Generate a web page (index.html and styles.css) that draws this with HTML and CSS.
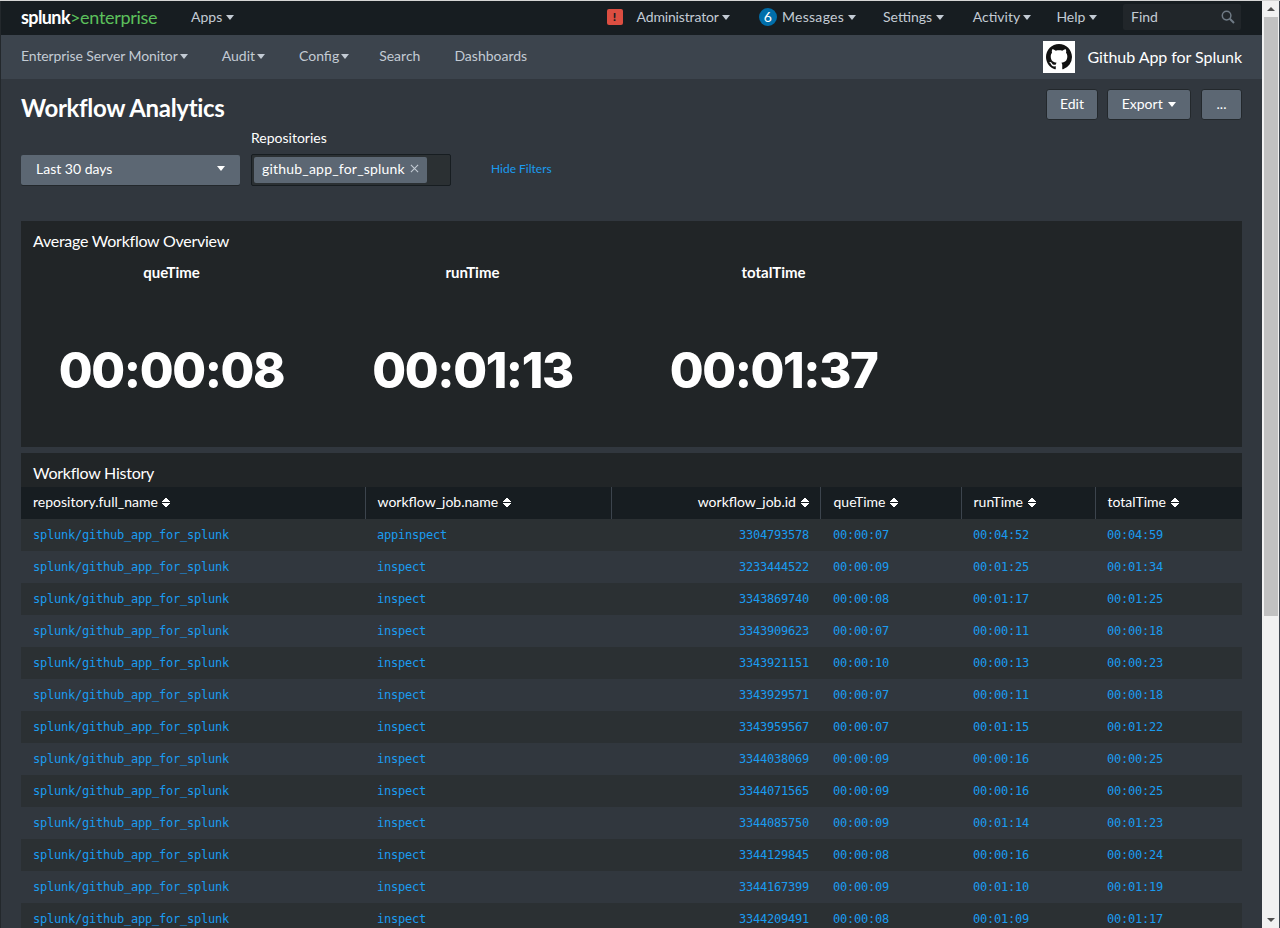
FILE: index.html
```html
<!DOCTYPE html>
<html lang="en">

<head>
    <meta charset="UTF-8">
    <meta name="viewport" content="width=device-width, initial-scale=1.0">
    <title>Workflow Analytics</title>
    <link rel="stylesheet" href="styles.css">
</head>

<body>
    <div class="window">
        <div class="page">
            <!-- top bar -->
            <div class="nav">
                <div class="logo">splunk<span class="logo-green">&gt;enterprise</span></div>
                <a class="nav-item apps">Apps <i class="caret"></i></a>
                <div class="nav-right">
                    <span class="alert">!</span>
                    <a class="nav-item admin">Administrator <i class="caret"></i></a>
                    <span class="badge">6</span>
                    <a class="nav-item messages">Messages <i class="caret"></i></a>
                    <a class="nav-item settings">Settings <i class="caret"></i></a>
                    <a class="nav-item activity">Activity <i class="caret"></i></a>
                    <a class="nav-item help">Help <i class="caret"></i></a>
                    <div class="find">
                        <span class="find-text">Find</span>
                        <svg class="find-icon" viewBox="0 0 14 14" width="14" height="14">
                            <circle cx="5.6" cy="5.6" r="4.3" fill="none" stroke="#6f7a85" stroke-width="1.5"></circle>
                            <path d="M8.8 8.8 L13 13" stroke="#6f7a85" stroke-width="2"></path>
                        </svg>
                    </div>
                </div>
            </div>

            <!-- app bar -->
            <div class="app-bar">
                <a class="app-item app-item-long">Enterprise Server Monitor<i class="caret"></i></a>
                <a class="app-item">Audit<i class="caret"></i></a>
                <a class="app-item app-item-config">Config<i class="caret"></i></a>
                <a class="app-item">Search</a>
                <a class="app-item">Dashboards</a>
                <div class="app-name">
                    <div class="app-logo">
                        <svg viewBox="0 0 16 16" width="26" height="26">
                            <path fill="#111" d="M8 0C3.58 0 0 3.58 0 8c0 3.54 2.29 6.53 5.47 7.59.4.07.55-.17.55-.38 0-.19-.01-.82-.01-1.49-2.01.37-2.53-.49-2.69-.94-.09-.23-.48-.94-.82-1.13-.28-.15-.68-.52-.01-.53.63-.01 1.08.58 1.23.82.72 1.21 1.87.87 2.33.66.07-.52.28-.87.51-1.07-1.78-.2-3.64-.89-3.64-3.95 0-.87.31-1.59.82-2.15-.08-.2-.36-1.02.08-2.12 0 0 .67-.21 2.2.82.64-.18 1.32-.27 2-.27.68 0 1.36.09 2 .27 1.53-1.04 2.2-.82 2.2-.82.44 1.1.16 1.92.08 2.12.51.56.82 1.27.82 2.15 0 3.07-1.87 3.75-3.65 3.95.29.25.54.73.54 1.48 0 1.07-.01 1.93-.01 2.2 0 .21.15.46.55.38A8.013 8.013 0 0016 8c0-4.42-3.58-8-8-8z"></path>
                        </svg>
                    </div>
                    <span class="app-title">Github App for Splunk</span>
                </div>
            </div>

            <div class="content">
                <div class="title-row">
                    <h1>Workflow Analytics</h1>
                    <div class="actions">
                        <button class="btn btn-edit">Edit</button>
                        <button class="btn btn-export">Export <i class="caret caret-white"></i></button>
                        <button class="btn btn-more">...</button>
                    </div>
                </div>

                <div class="filters">
                    <div class="time-picker">
                        <span>Last 30 days</span>
                        <i class="caret caret-white"></i>
                    </div>
                    <div class="filter">
                        <label>Repositories</label>
                        <div class="multi">
                            <span class="chip">github_app_for_splunk
                                <svg viewBox="0 0 10 10" width="9" height="9">
                                    <path d="M1 1 L9 9 M9 1 L1 9" stroke="#c3cbd4" stroke-width="1.2"></path>
                                </svg>
                            </span>
                        </div>
                    </div>
                    <a class="hide-filters">Hide Filters</a>
                </div>

                <div class="panel panel-overview">
                    <h2>Average Workflow Overview</h2>
                    <div class="singles">
                        <div class="single">
                            <div class="single-label">queTime</div>
                            <div class="single-value">00:00:08</div>
                        </div>
                        <div class="single">
                            <div class="single-label">runTime</div>
                            <div class="single-value">00:01:13</div>
                        </div>
                        <div class="single">
                            <div class="single-label">totalTime</div>
                            <div class="single-value">00:01:37</div>
                        </div>
                    </div>
                </div>

                <div class="panel panel-history">
                    <h2>Workflow History</h2>
                    <table>
                        <colgroup>
                            <col class="col-repo">
                            <col class="col-name">
                            <col class="col-id">
                            <col class="col-que">
                            <col class="col-run">
                            <col class="col-total">
                        </colgroup>
                        <thead>
                            <tr>
                                <th>repository.full_name <i class="sort"></i></th>
                                <th>workflow_job.name <i class="sort"></i></th>
                                <th class="num">workflow_job.id <i class="sort"></i></th>
                                <th>queTime <i class="sort"></i></th>
                                <th>runTime <i class="sort"></i></th>
                                <th>totalTime <i class="sort"></i></th>
                            </tr>
                        </thead>
                        <tbody>
                            <tr><td>splunk/github_app_for_splunk</td><td>appinspect</td><td class="num">3304793578</td><td>00:00:07</td><td>00:04:52</td><td>00:04:59</td></tr>
                            <tr><td>splunk/github_app_for_splunk</td><td>inspect</td><td class="num">3233444522</td><td>00:00:09</td><td>00:01:25</td><td>00:01:34</td></tr>
                            <tr><td>splunk/github_app_for_splunk</td><td>inspect</td><td class="num">3343869740</td><td>00:00:08</td><td>00:01:17</td><td>00:01:25</td></tr>
                            <tr><td>splunk/github_app_for_splunk</td><td>inspect</td><td class="num">3343909623</td><td>00:00:07</td><td>00:00:11</td><td>00:00:18</td></tr>
                            <tr><td>splunk/github_app_for_splunk</td><td>inspect</td><td class="num">3343921151</td><td>00:00:10</td><td>00:00:13</td><td>00:00:23</td></tr>
                            <tr><td>splunk/github_app_for_splunk</td><td>inspect</td><td class="num">3343929571</td><td>00:00:07</td><td>00:00:11</td><td>00:00:18</td></tr>
                            <tr><td>splunk/github_app_for_splunk</td><td>inspect</td><td class="num">3343959567</td><td>00:00:07</td><td>00:01:15</td><td>00:01:22</td></tr>
                            <tr><td>splunk/github_app_for_splunk</td><td>inspect</td><td class="num">3344038069</td><td>00:00:09</td><td>00:00:16</td><td>00:00:25</td></tr>
                            <tr><td>splunk/github_app_for_splunk</td><td>inspect</td><td class="num">3344071565</td><td>00:00:09</td><td>00:00:16</td><td>00:00:25</td></tr>
                            <tr><td>splunk/github_app_for_splunk</td><td>inspect</td><td class="num">3344085750</td><td>00:00:09</td><td>00:01:14</td><td>00:01:23</td></tr>
                            <tr><td>splunk/github_app_for_splunk</td><td>inspect</td><td class="num">3344129845</td><td>00:00:08</td><td>00:00:16</td><td>00:00:24</td></tr>
                            <tr><td>splunk/github_app_for_splunk</td><td>inspect</td><td class="num">3344167399</td><td>00:00:09</td><td>00:01:10</td><td>00:01:19</td></tr>
                            <tr><td>splunk/github_app_for_splunk</td><td>inspect</td><td class="num">3344209491</td><td>00:00:08</td><td>00:01:09</td><td>00:01:17</td></tr>
                        </tbody>
                    </table>
                </div>
            </div>
        </div>

        <!-- browser scrollbar -->
        <div class="scrollbar">
            <i class="arrow-up"></i>
            <div class="thumb"></div>
            <i class="arrow-down"></i>
        </div>
    </div>
</body>

</html>
```

FILE: styles.css
```css
html, body {
    margin: 0;
    padding: 0;
    height: 100%;
    overflow: hidden;
}

body {
    font-family: Lato, "Open Sans", Arial, sans-serif;
    font-size: 14px;
    background-color: #31373e;
    color: #fff;
}

.window {
    display: flex;
    height: 928px;
    border-top: 1px solid #d5d5d5;
    box-sizing: border-box;
}

.page {
    flex: 1;
    min-width: 0;
    overflow: hidden;
    border-left: 1px solid #23282c;
}

.caret {
    display: inline-block;
    width: 0;
    height: 0;
    border-left: 4px solid transparent;
    border-right: 4px solid transparent;
    border-top: 5px solid #c3cbd4;
    vertical-align: 2px;
}

.caret-white {
    border-top-color: #fff;
}

/* top bar */
.nav {
    display: flex;
    align-items: center;
    height: 34px;
    padding-left: 20px;
    padding-bottom: 2px;
    box-sizing: border-box;
    background-color: #171d21;
    color: #c3cbd4;
}

.logo {
    width: 170px;
    font-size: 18px;
    font-weight: 700;
    letter-spacing: -0.6px;
    color: #fff;
}

.logo-green {
    font-weight: 400;
    letter-spacing: -0.3px;
    color: #5cc05c;
}

.nav-item {
    padding-bottom: 2px;
}

.nav-right {
    display: flex;
    align-items: center;
    margin-left: auto;
    padding-right: 21px;
}

.alert {
    width: 16px;
    height: 16px;
    margin-right: 14px;
    border-radius: 2px;
    background-color: #dc4e41;
    color: #171d21;
    font-size: 12px;
    font-weight: 900;
    line-height: 16px;
    text-align: center;
}

.admin {
    letter-spacing: -0.15px;
}

.badge {
    width: 18px;
    height: 18px;
    margin-left: 29px;
    margin-right: 5px;
    border-radius: 50%;
    background-color: #006eaa;
    color: #fff;
    line-height: 18px;
    text-align: center;
}

.messages {
    letter-spacing: 0.3px;
}

.settings {
    margin-left: 27px;
}

.activity {
    margin-left: 29px;
}

.help {
    margin-left: 25px;
}

.find {
    display: flex;
    align-items: center;
    justify-content: space-between;
    width: 118px;
    height: 26px;
    margin-left: 26px;
    padding: 0 6px 0 8px;
    box-sizing: border-box;
    border-radius: 2px;
    background-color: #21262a;
}

.find-text {
    padding-bottom: 2px;
}

/* app bar */
.app-bar {
    display: flex;
    align-items: center;
    height: 44px;
    padding: 0 20px;
    background-color: #3c444d;
    color: #c3cbd4;
    gap: 30px;
}

.app-item {
    margin-right: 4px;
    padding-bottom: 4px;
}

.app-item .caret {
    margin-left: 2px;
}

.app-item-long {
    letter-spacing: -0.1px;
}

.app-item-config {
    margin-right: 0;
}

.app-name {
    display: flex;
    align-items: center;
    margin-left: auto;
    font-size: 16px;
    letter-spacing: -0.05px;
    color: #fff;
    gap: 12px;
}

.app-title {
    padding-bottom: 2px;
}

.app-logo {
    display: flex;
    align-items: center;
    justify-content: center;
    width: 32px;
    height: 32px;
    background-color: #fff;
}

/* dashboard */
.content {
    padding: 0 20px;
}

.title-row {
    display: flex;
    justify-content: space-between;
    align-items: flex-start;
    padding-top: 10px;
}

h1 {
    margin: 4px 0 0;
    font-size: 24px;
    font-weight: 700;
    letter-spacing: -0.33px;
    line-height: 30px;
}

.actions {
    display: flex;
    gap: 9px;
}

.btn {
    height: 31px;
    padding: 0 0 2px;
    border: 1px solid #23282c;
    border-radius: 3px;
    background-color: #5c6773;
    color: #fff;
    font-family: inherit;
    font-size: 14px;
}

.btn .caret {
    margin-left: 2px;
}

.btn-edit {
    width: 52px;
}

.btn-export {
    width: 84px;
}

.btn-more {
    width: 41px;
    margin-left: 1px;
}

.filters {
    display: flex;
    align-items: flex-end;
    margin-top: 7px;
    height: 56px;
}

.time-picker {
    display: flex;
    align-items: center;
    justify-content: space-between;
    width: 219px;
    height: 30px;
    margin-bottom: 1px;
    padding: 0 15px 3px;
    box-sizing: border-box;
    border-radius: 2px;
    background-color: #5c6773;
    box-shadow: 0 1px 0 #23282c;
}

.filter {
    margin-left: 11px;
}

.filter label {
    display: block;
    margin-bottom: 7px;
    line-height: 18px;
}

.multi {
    display: flex;
    align-items: center;
    width: 200px;
    height: 32px;
    padding: 0 2px;
    box-sizing: border-box;
    border: 1px solid #171d21;
    border-radius: 2px;
    background-color: #2b3033;
}

.chip {
    display: flex;
    align-items: center;
    height: 26px;
    padding: 0 8px 3px;
    box-sizing: border-box;
    border-radius: 2px;
    background-color: #5c6773;
    letter-spacing: 0.2px;
    gap: 5px;
}

.hide-filters {
    margin-left: 40px;
    margin-bottom: 10px;
    font-size: 12px;
    color: #1a9cf0;
}

.panel {
    background-color: #212527;
}

.panel h2 {
    margin: 0;
    padding: 0 12px;
    font-size: 16px;
    font-weight: 400;
    letter-spacing: -0.25px;
}

.panel-overview {
    height: 226px;
    margin-top: 35px;
    padding-top: 10px;
    box-sizing: border-box;
}

.panel-overview h2 {
    line-height: 19px;
}

.singles {
    display: flex;
}

.single {
    width: 301px;
    text-align: center;
}

.single-label {
    margin-top: 13px;
    font-size: 15px;
    font-weight: 700;
    line-height: 18px;
}

.single-value {
    margin-top: 59px;
    font-family: Inter, Lato, sans-serif;
    font-size: 49px;
    font-weight: 800;
    letter-spacing: -1.4px;
    line-height: 62px;
}

.panel-history {
    margin-top: 6px;
}

.panel-history h2 {
    padding-top: 6px;
    line-height: 28px;
}

table {
    width: 100%;
    table-layout: fixed;
    border-collapse: collapse;
}

.col-repo { width: 344px; }
.col-name { width: 246px; }
.col-id { width: 209px; }
.col-que { width: 141px; }
.col-run { width: 134px; }

th {
    height: 32px;
    padding: 0 11px 3px 12px;
    box-sizing: border-box;
    border-left: 1px solid #3c444d;
    background-color: #171d21;
    font-size: 14px;
    font-weight: 400;
    text-align: left;
}

th:first-child {
    border-left: none;
}

th.num, td.num {
    text-align: right;
}

th:nth-child(4), td:nth-child(4) {
    padding-left: 13px;
}

.sort {
    display: inline-block;
    width: 8px;
    height: 11px;
    margin-left: 1px;
    vertical-align: -1px;
    background:
        linear-gradient(to bottom right, transparent 50%, #fff 50%) 0 0 / 4px 5px no-repeat,
        linear-gradient(to bottom left, transparent 50%, #fff 50%) 4px 0 / 4px 5px no-repeat,
        linear-gradient(to top right, transparent 50%, #fff 50%) 0 6px / 4px 5px no-repeat,
        linear-gradient(to top left, transparent 50%, #fff 50%) 4px 6px / 4px 5px no-repeat;
}

td {
    height: 32px;
    padding: 0 11px 0 12px;
    font-family: "DejaVu Sans Mono", "Liberation Mono", monospace;
    font-size: 12px;
    letter-spacing: -0.22px;
    color: #1a9cf0;
    white-space: nowrap;
}

tbody tr:nth-child(odd) {
    background-color: #2b3033;
}

tbody tr:nth-child(even) {
    background-color: #31373e;
}

/* browser scrollbar */
.scrollbar {
    display: flex;
    flex-direction: column;
    align-items: center;
    width: 18px;
    box-sizing: border-box;
    border-right: 1px solid #3c444d;
    background-color: #f1f1f1;
}

.arrow-up, .arrow-down {
    width: 0;
    height: 0;
    border-left: 4px solid transparent;
    border-right: 4px solid transparent;
}

.arrow-up {
    margin-top: 6px;
    border-bottom: 4px solid #505050;
}

.thumb {
    width: 14px;
    height: 599px;
    margin-top: 6px;
    background-color: #c1c1c1;
}

.arrow-down {
    margin-top: auto;
    margin-bottom: 6px;
    border-top: 4px solid #505050;
}
```
